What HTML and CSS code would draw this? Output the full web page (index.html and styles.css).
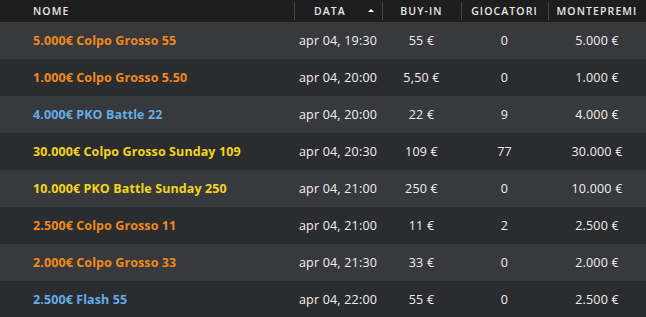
FILE: index.html
```html
<!DOCTYPE html>
<html lang="it">
<head>
<meta charset="utf-8">
<title>Tornei</title>
<link rel="stylesheet" href="styles.css">
</head>
<body>
<table class="tourneys">
  <colgroup>
    <col class="c-name"><col class="c-date"><col class="c-buy"><col class="c-players"><col class="c-prize">
  </colgroup>
  <thead>
    <tr>
      <th class="th-name"><span class="th-label">NOME</span></th>
      <th class="th-sorted"><span class="th-label">DATA</span><span class="sort-arrow"></span></th>
      <th><span class="th-label">BUY-IN</span></th>
      <th><span class="th-label">GIOCATORI</span></th>
      <th><span class="th-label">MONTEPREMI</span></th>
    </tr>
  </thead>
  <tbody>
    <tr><td class="name orange">5.000€ Colpo Grosso 55</td><td>apr 04, 19:30</td><td>55 €</td><td>0</td><td>5.000 €</td></tr>
    <tr><td class="name orange">1.000€ Colpo Grosso 5.50</td><td>apr 04, 20:00</td><td>5,50 €</td><td>0</td><td>1.000 €</td></tr>
    <tr><td class="name blue">4.000€ PKO Battle 22</td><td>apr 04, 20:00</td><td>22 €</td><td>9</td><td>4.000 €</td></tr>
    <tr><td class="name yellow">30.000€ Colpo Grosso Sunday 109</td><td>apr 04, 20:30</td><td>109 €</td><td>77</td><td>30.000 €</td></tr>
    <tr><td class="name yellow">10.000€ PKO Battle Sunday 250</td><td>apr 04, 21:00</td><td>250 €</td><td>0</td><td>10.000 €</td></tr>
    <tr><td class="name orange">2.500€ Colpo Grosso 11</td><td>apr 04, 21:00</td><td>11 €</td><td>2</td><td>2.500 €</td></tr>
    <tr><td class="name orange">2.000€ Colpo Grosso 33</td><td>apr 04, 21:30</td><td>33 €</td><td>0</td><td>2.000 €</td></tr>
    <tr><td class="name blue">2.500€ Flash 55</td><td>apr 04, 22:00</td><td>55 €</td><td>0</td><td>2.500 €</td></tr>
  </tbody>
</table>
</body>
</html>
```

FILE: styles.css
```css
html, body {
  margin: 0;
  padding: 0;
  background: #2c2d30;
}
body {
  font-family: "Open Sans", "Liberation Sans", sans-serif;
  color: #f2f2f2;
  overflow: hidden;
}
.tourneys {
  width: 646px;
  border-collapse: collapse;
  table-layout: fixed;
}
.c-name { width: 294px; }
.c-date { width: 88px; }
.c-buy { width: 79px; }
.c-players { width: 87px; }
.c-prize { width: 98px; }

thead tr {
  background: #1e1e1f;
  height: 22px;
}
th {
  font-size: 10.5px;
  font-weight: 600;
  letter-spacing: 1.1px;
  color: #e6e6e6;
  text-align: center;
  padding: 0;
  position: relative;
  line-height: 22px;
}
th + th::before {
  content: "";
  position: absolute;
  left: 0;
  top: 2px;
  bottom: 2px;
  width: 1px;
  background: #444548;
}
.th-name {
  text-align: left;
  padding-left: 33px;
}
.th-sorted {
  text-align: left;
  padding-left: 20px;
}
.sort-arrow {
  position: absolute;
  right: 8px;
  top: 9px;
  width: 0;
  height: 0;
  border-left: 3px solid transparent;
  border-right: 3px solid transparent;
  border-bottom: 3px solid #ffffff;
}

tbody tr {
  height: 37px;
}
tbody tr:nth-child(odd) { background: #38393d; }
tbody tr:nth-child(even) { background: #2b2c2f; }
td {
  font-size: 12.5px;
  letter-spacing: 0.2px;
  padding: 0;
  text-align: center;
  color: #f0f0f0;
  white-space: nowrap;
}
td.name {
  text-align: left;
  padding-left: 33px;
  font-weight: 700;
  font-size: 12.5px;
  letter-spacing: 0.1px;
}
.orange { color: #f08a1c; }
.blue { color: #62ade8; }
.yellow { color: #f4d519; }
```
